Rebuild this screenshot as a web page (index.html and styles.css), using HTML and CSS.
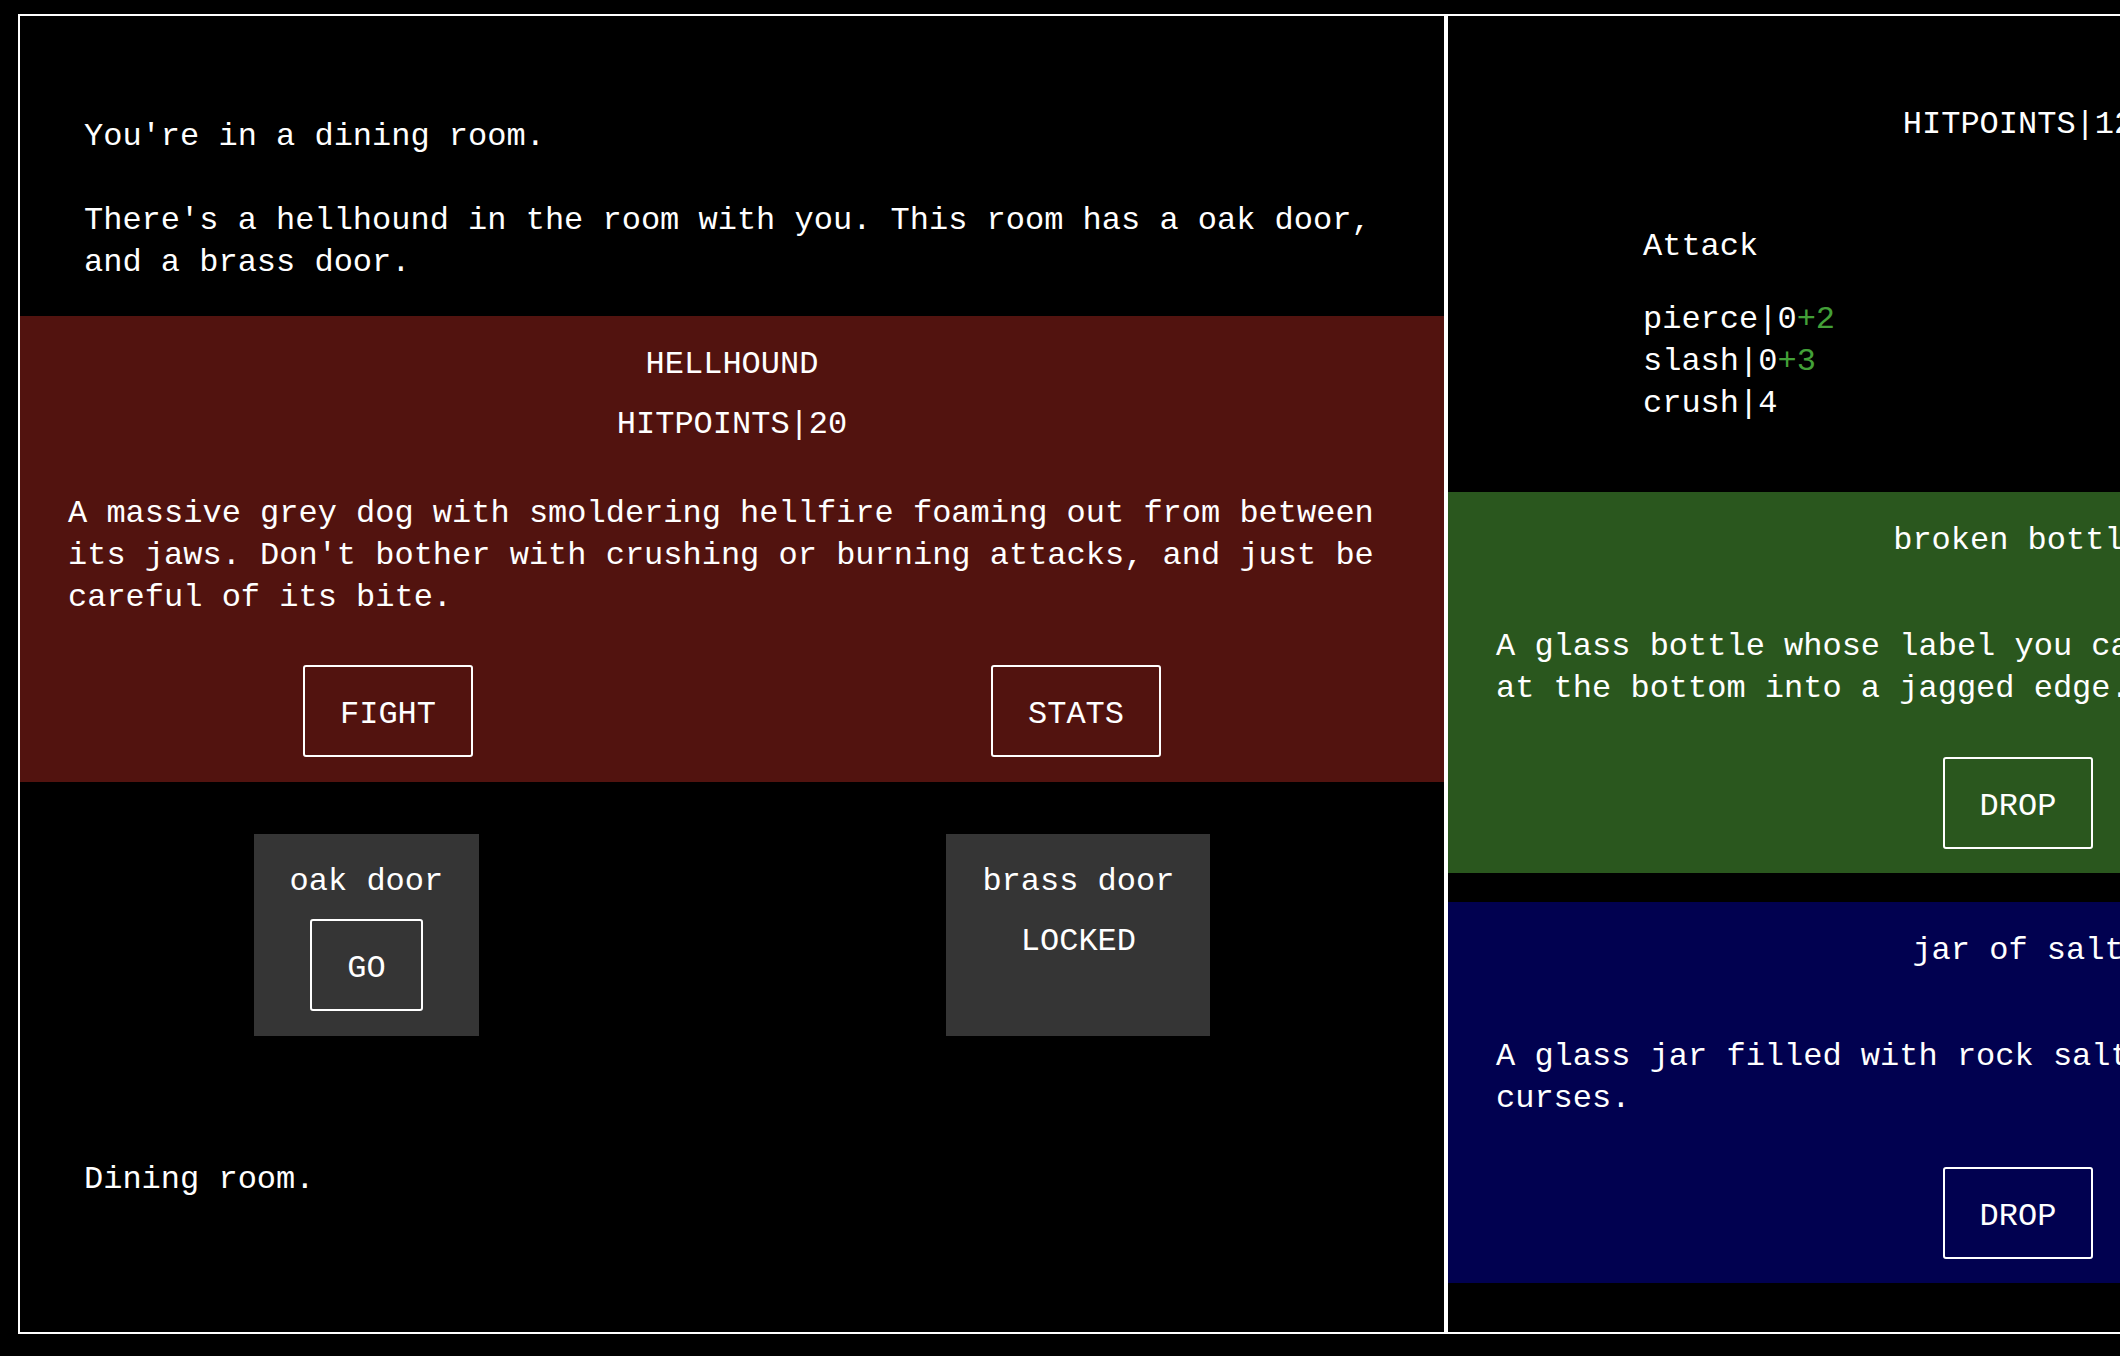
FILE: index.html
```html
<!DOCTYPE html>
<html lang="en">
<head>
<meta charset="utf-8">
<title>Dining room</title>
<link rel="stylesheet" href="styles.css">
</head>
<body>
<main class="game">
  <section class="panel room">
    <div class="narration">
      <p>You're in a dining room.</p>
      <p>There's a hellhound in the room with you. This room has a oak door, and a brass door.</p>
    </div>
    <div class="monster">
      <h2 class="monster-name">HELLHOUND</h2>
      <div class="monster-hp">HITPOINTS|20</div>
      <p class="monster-desc">A massive grey dog with smoldering hellfire foaming out from between its jaws. Don't bother with crushing or burning attacks, and just be careful of its bite.</p>
      <div class="monster-actions">
        <button class="btn">FIGHT</button>
        <button class="btn">STATS</button>
      </div>
    </div>
    <div class="exits">
      <div class="exit">
        <div class="exit-name">oak door</div>
        <button class="btn btn-go">GO</button>
      </div>
      <div class="exit">
        <div class="exit-name">brass door</div>
        <div class="exit-locked">LOCKED</div>
      </div>
    </div>
    <p class="room-name">Dining room.</p>
  </section>
  <aside class="panel player">
    <div class="player-hp">HITPOINTS|12</div>
    <div class="stat-cols">
      <div class="stat-col">
        <h3 class="stat-title">Attack</h3>
        <ul class="stat-list">
          <li>pierce|0<span class="bonus">+2</span></li>
          <li>slash|0<span class="bonus">+3</span></li>
          <li>crush|4</li>
        </ul>
      </div>
      <div class="stat-col">
        <h3 class="stat-title">Defense</h3>
        <ul class="stat-list">
          <li>pierce|0</li>
          <li>slash|0</li>
          <li>crush|0</li>
        </ul>
      </div>
    </div>
    <div class="item item-weapon">
      <h3 class="item-name">broken bottle</h3>
      <p class="item-desc">A glass bottle whose label you can't read, broken off at the bottom into a jagged edge.</p>
      <div class="item-actions"><button class="btn">DROP</button></div>
    </div>
    <div class="item item-charm">
      <h3 class="item-name">jar of salt</h3>
      <p class="item-desc">A glass jar filled with rock salt. Protects against curses.</p>
      <div class="item-actions"><button class="btn">DROP</button></div>
    </div>
  </aside>
</main>
</body>
</html>
```

FILE: styles.css
```css
* {
  box-sizing: border-box;
}

html,
body {
  margin: 0;
  padding: 0;
  background: #000;
  overflow: hidden;
}

body {
  font-family: "Liberation Mono", "DejaVu Sans Mono", monospace;
  font-size: 32px;
  line-height: 42px;
  color: #fff;
}

p,
h2,
h3,
ul,
li {
  margin: 0;
  padding: 0;
  font: inherit;
}

ul {
  list-style: none;
}

.game {
  display: flex;
  width: max-content;
  padding: 14px 0 0 18px;
}

.panel {
  flex: none;
  height: 1320px;
  border: 2px solid #fff;
}

.room {
  width: 1428px;
}

.player {
  width: 1144px;
}

.btn {
  font: inherit;
  line-height: 42px;
  color: #fff;
  background: transparent;
  border: 2px solid #fff;
  border-radius: 3px;
  padding: 27px 35px 19px;
  cursor: pointer;
}

/* left panel */
.narration {
  padding: 100px 64px 32px;
}

.narration p + p {
  margin-top: 42px;
}

.monster {
  background: #52130f;
  padding: 28px 24px 25px;
  text-align: center;
}

.monster-hp {
  margin-top: 18px;
}

.monster-desc {
  margin-top: 47px;
  padding: 0 24px;
  text-align: left;
}

.monster-actions {
  margin-top: 46px;
  display: flex;
  justify-content: space-around;
}

.exits {
  margin-top: 52px;
  display: flex;
  justify-content: space-around;
}

.exit {
  display: flex;
  flex-direction: column;
  align-items: center;
  background: #353535;
  padding: 27px 36px 25px;
}

.btn-go {
  margin-top: 16px;
}

.exit-locked {
  margin-top: 18px;
}

.room-name {
  margin-top: 123px;
  padding: 0 64px;
}

/* right panel */
.player-hp {
  margin-top: 88px;
  text-align: center;
}

.stat-cols {
  margin-top: 80px;
  display: flex;
  gap: 420px;
  padding-left: 195px;
}

.stat-list {
  margin-top: 31px;
}

.bonus {
  color: #43a038;
}

.item {
  margin-top: 67px;
  padding: 28px 48px 24px;
}

.item + .item {
  margin-top: 29px;
}

.item-name {
  text-align: center;
}

.item-desc {
  margin-top: 64px;
}

.item-actions {
  margin-top: 47px;
  display: flex;
  justify-content: center;
}

.item-weapon {
  background: #2a571e;
}

.item-charm {
  background: #010150;
}
```
